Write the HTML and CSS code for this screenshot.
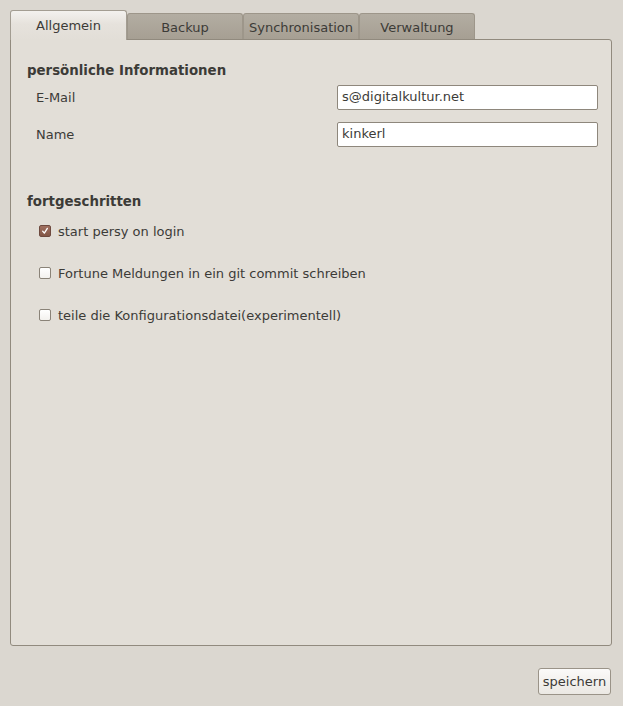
FILE: index.html
```html
<!DOCTYPE html>
<html>
<head>
<meta charset="utf-8">
<link rel="stylesheet" href="styles.css">
</head>
<body>
<div class="window">
  <div class="tabs">
    <div class="tab active">Allgemein</div>
    <div class="tab">Backup</div>
    <div class="tab">Synchronisation</div>
    <div class="tab">Verwaltung</div>
  </div>
  <div class="panel">
    <div class="section-title">persönliche Informationen</div>
    <div class="field">
      <span class="label">E-Mail</span>
      <div class="entry">s@digitalkultur.net</div>
    </div>
    <div class="field">
      <span class="label">Name</span>
      <div class="entry">kinkerl</div>
    </div>
    <div class="section-title second">fortgeschritten</div>
    <div class="check">
      <span class="box checked"><svg width="12" height="12" viewBox="0 0 12 12"><path d="M3.2 6.2 L5.2 8.6 L8.8 2.8" fill="none" stroke="#fff" stroke-width="1.6" stroke-linecap="round" stroke-linejoin="round"/></svg></span>
      <span class="check-label">start persy on login</span>
    </div>
    <div class="check">
      <span class="box"></span>
      <span class="check-label">Fortune Meldungen in ein git commit schreiben</span>
    </div>
    <div class="check">
      <span class="box"></span>
      <span class="check-label">teile die Konfigurationsdatei(experimentell)</span>
    </div>
  </div>
  <div class="footer">
    <div class="button">speichern</div>
  </div>
</div>
</body>
</html>
```
FILE: styles.css
```css
html, body {
  margin: 0;
  padding: 0;
}
body {
  background: #dbd7d0;
  font-family: "DejaVu Sans", sans-serif;
  font-size: 13px;
  color: #3c3b37;
  width: 623px;
  height: 706px;
  overflow: hidden;
}
.window {
  padding: 10px 11px 0 10px;
}
.tabs {
  display: flex;
  align-items: flex-end;
  height: 29px;
  position: relative;
  z-index: 1;
}
.tab {
  box-sizing: border-box;
  width: 116px;
  height: 26px;
  border: 1px solid #9d968a;
  border-bottom: none;
  border-radius: 3px 3px 0 0;
  background: linear-gradient(#b3ada2, #a69f93);
  display: flex;
  align-items: center;
  justify-content: center;
  padding-top: 2px;
  color: #3c3b37;
}
.tab.active {
  width: 117px;
  height: 30px;
  margin-bottom: -1px;
  border-color: #a39d92;
  background: linear-gradient(#f3f1ee 0%, #e6e2dc 45%, #e2ded7 100%);
  padding-top: 0;
  padding-bottom: 1px;
}
.panel {
  box-sizing: border-box;
  height: 607px;
  background: #e2ded7;
  border: 1px solid #918a7e;
  border-radius: 0 3px 3px 3px;
  padding: 22px 13px 0 16px;
  display: flex;
  flex-direction: column;
}
.section-title {
  font-weight: bold;
  font-size: 13.35px;
  height: 18px;
  line-height: 18px;
}
.section-title.second {
  margin-top: 46px;
}
.field {
  display: flex;
  align-items: center;
  justify-content: space-between;
  margin-top: 5px;
}
.field + .field {
  margin-top: 12px;
}
.label {
  padding-left: 9px;
}
.entry {
  box-sizing: border-box;
  width: 261px;
  height: 25px;
  background: #ffffff;
  border: 1px solid #8e877c;
  border-radius: 2px;
  padding: 0 4px;
  line-height: 22px;
  color: #3c3b37;
}
.check {
  display: flex;
  align-items: center;
  height: 18px;
  margin-top: 24px;
}
.section-title.second + .check {
  margin-top: 11px;
}
.box {
  box-sizing: border-box;
  width: 12px;
  height: 12px;
  margin-left: 12px;
  margin-right: 7px;
  border: 1px solid #8a8378;
  border-radius: 2px;
  background: linear-gradient(#ffffff, #f3f1ee);
  display: flex;
  align-items: center;
  justify-content: center;
}
.box svg {
  display: block;
}
.box.checked {
  border-color: #6e4a3f;
  background: linear-gradient(#a07060, #835646);
}
.footer {
  display: flex;
  justify-content: flex-end;
  padding-top: 22px;
  padding-right: 1px;
}
.button {
  box-sizing: border-box;
  width: 73px;
  height: 27px;
  border: 1px solid #9a9388;
  border-radius: 3px;
  background: linear-gradient(#fbfaf9, #ebe8e3);
  display: flex;
  align-items: center;
  justify-content: center;
  color: #3c3b37;
}
```
